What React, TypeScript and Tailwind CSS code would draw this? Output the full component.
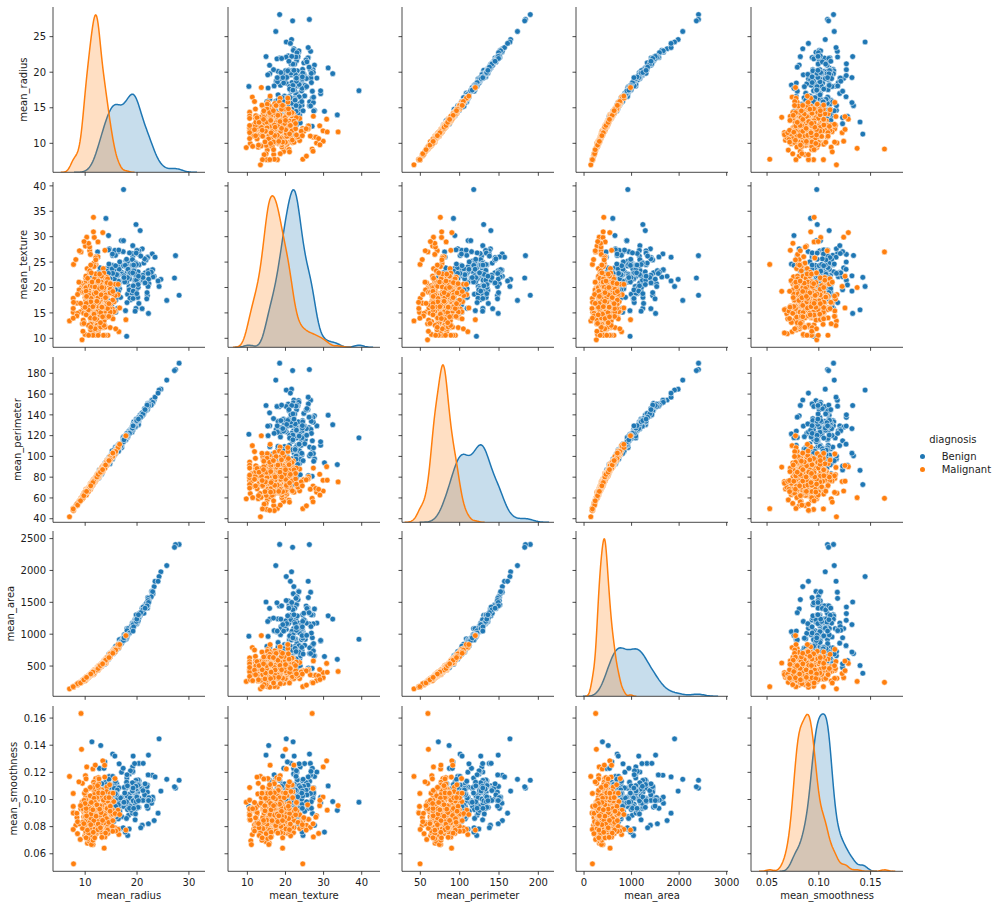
import React from 'react';

const BLUE = '#1f77b4';
const ORANGE = '#ff7f0e';
const INK = '#1c1c1c';
const W = 152;
const H = 165.3;

type Row = [number, number, number, number, number];

function mulberry32(seed: number) {
  let a = seed;
  return function () {
    a |= 0;
    a = (a + 0x6d2b79f5) | 0;
    let t = Math.imul(a ^ (a >>> 15), 1 | a);
    t = (t + Math.imul(t ^ (t >>> 7), 61 | t)) ^ t;
    return ((t ^ (t >>> 14)) >>> 0) / 4294967296;
  };
}

function genData() {
  const rand = mulberry32(20240611);
  const randn = () => {
    let u = 0;
    while (u === 0) u = rand();
    const v = rand();
    return Math.sqrt(-2 * Math.log(u)) * Math.cos(2 * Math.PI * v);
  };
  const clamp = (v: number, a: number, b: number) => Math.max(a, Math.min(b, v));
  const per = (r: number, n: number) => 6.89 * r - 4.4 + n * randn();
  const area = (r: number, n: number) => r * r * (2.93 + 0.0124 * (r - 7)) * (1 + n * randn());
  const mk = (r: number, t: number, s: number, pn: number, an: number): Row => [r, t, per(r, pn), area(r, an), s];

  const blue: Row[] = [];
  const extremesB: [number, number, number][] = [
    [28.11, 18.47, 0.1142],
    [27.42, 26.27, 0.1084],
    [27.22, 21.87, 0.1094],
    [25.73, 17.46, 0.1149],
    [24.6, 21.6, 0.1062],
    [23.3, 22.2, 0.0845],
    [22.2, 14.9, 0.1327],
    [17.4, 39.28, 0.098],
    [24.25, 20.2, 0.1447],
    [11.3, 22.0, 0.1425],
    [13.0, 15.6, 0.1398],
    [15.3, 26.3, 0.1335],
    [18.2, 24.6, 0.0735],
    [18.0, 10.4, 0.095],
    [20.6, 31.2, 0.11],
    [19.8, 32.4, 0.0985],
    [14.0, 33.6, 0.092],
    [12.4, 27.0, 0.1],
  ];
  for (const [r, t, s] of extremesB) blue.push(mk(r, t, s, 1.2, 0.02));
  for (let i = blue.length; i < 212; i++) {
    const u = rand();
    let r =
      u < 0.38 ? 15.6 + 1.0 * randn() : u < 0.72 ? 18.9 + 1.0 * randn() : u < 0.9 ? 21.4 + 1.4 * randn() : 13.4 + 0.8 * randn();
    r = clamp(r, 12.0, 25);
    const t = clamp(21.5 + 3.0 * randn(), 13.5, 30.5);
    const s = clamp(0.1022 + 0.0105 * randn() + 0.0006 * (r - 17), 0.076, 0.132);
    blue.push(mk(r, t, s, 1.7, 0.03));
  }

  const orange: Row[] = [];
  const extremesO: [number, number, number][] = [
    [6.98, 13.43, 0.117],
    [7.76, 24.54, 0.0526],
    [9.2, 27.0, 0.1634],
    [9.3, 20.0, 0.137],
    [11.6, 33.81, 0.0955],
    [17.85, 13.66, 0.0775],
    [9.4, 9.71, 0.098],
    [11.0, 10.9, 0.0696],
    [16.5, 11.3, 0.0742],
    [8.2, 25.5, 0.081],
    [13.4, 30.8, 0.1285],
    [10.3, 29.9, 0.124],
  ];
  for (const [r, t, s] of extremesO) orange.push(mk(r, t, s, 0.9, 0.02));
  for (let i = orange.length; i < 357; i++) {
    const r = clamp(12.15 + 1.7 * randn(), 7.7, 17.2);
    const u = rand();
    const t = u < 0.04 ? clamp(27.8 + 1.3 * randn(), 25, 31) : clamp(17.2 + 3.3 * randn(), 10.6, 29.5);
    const w = rand();
    const s = w < 0.7 ? 0.0862 + 0.0082 * randn() : 0.0995 + 0.011 * randn();
    orange.push(mk(r, t, clamp(s, 0.062, 0.127), 1.0, 0.025));
  }
  return { blue, orange };
}

const DATA = genData();

type VarSpec = {
  name: string;
  xlim: [number, number];
  ylim: [number, number];
  xticks: number[];
  yticks: number[];
  dec: number;
};

const VARS: VarSpec[] = [
  { name: 'mean_radius', xlim: [3.8, 33.1], ylim: [5.925, 29.17], xticks: [10, 20, 30], yticks: [10, 15, 20, 25], dec: 0 },
  { name: 'mean_texture', xlim: [4.92, 44.8], ylim: [8.23, 40.76], xticks: [10, 20, 30, 40], yticks: [10, 15, 20, 25, 30, 35, 40], dec: 0 },
  { name: 'mean_perimeter', xlim: [26.7, 219.9], ylim: [36.55, 195.7], xticks: [50, 100, 150, 200], yticks: [40, 60, 80, 100, 120, 140, 160, 180], dec: 0 },
  { name: 'mean_area', xlim: [-169, 3028], ylim: [25.6, 2618.9], xticks: [0, 1000, 2000, 3000], yticks: [500, 1000, 1500, 2000, 2500], dec: 0 },
  { name: 'mean_smoothness', xlim: [0.0345, 0.1813], ylim: [0.04709, 0.1689], xticks: [0.05, 0.1, 0.15], yticks: [0.06, 0.08, 0.1, 0.12, 0.14, 0.16], dec: 2 },
];

function fmt(v: number, dec: number) {
  return dec ? v.toFixed(dec) : String(v);
}

function labelWidth(s: string) {
  let w = 0;
  for (const ch of s) w += ch === '.' ? 3.18 : 6.36;
  return w;
}

function kde(vals: number[]) {
  const n = vals.length;
  const mean = vals.reduce((a, b) => a + b, 0) / n;
  const sd = Math.sqrt(vals.reduce((a, b) => a + (b - mean) * (b - mean), 0) / (n - 1));
  const sorted = [...vals].sort((a, b) => a - b);
  const q = (p: number) => sorted[Math.floor(p * (n - 1))];
  const iqr = q(0.75) - q(0.25);
  const bw = 1.059 * Math.min(sd, iqr / 1.349) * Math.pow(n, -0.2);
  const lo = sorted[0] - 3 * bw;
  const hi = sorted[n - 1] + 3 * bw;
  const pts: [number, number][] = [];
  const G = 120;
  for (let k = 0; k < G; k++) {
    const x = lo + ((hi - lo) * k) / (G - 1);
    let d = 0;
    for (const v of vals) {
      const z = (x - v) / bw;
      d += Math.exp(-0.5 * z * z);
    }
    pts.push([x, d / (n * bw * Math.sqrt(2 * Math.PI))]);
  }
  return pts;
}

const KDES = VARS.map((_, j) => ({
  blue: kde(DATA.blue.map((r) => r[j])),
  orange: kde(DATA.orange.map((r) => r[j])),
}));

function Panel({ i, j }: { i: number; j: number }) {
  const vx = VARS[j];
  const vy = VARS[i];
  const sx = (v: number) => ((v - vx.xlim[0]) / (vx.xlim[1] - vx.xlim[0])) * W;
  const sy = (v: number) => H - ((v - vy.ylim[0]) / (vy.ylim[1] - vy.ylim[0])) * H;
  const showY = j === 0;
  const showX = i === 4;

  let body: React.ReactNode;
  if (i === j) {
    const k = KDES[j];
    const ymax = Math.max(...k.blue.map((p) => p[1]), ...k.orange.map((p) => p[1])) * 1.05;
    const syd = (d: number) => H - (d / ymax) * H;
    const line = (pts: [number, number][]) =>
      pts.map((p, idx) => `${idx ? 'L' : 'M'}${sx(p[0]).toFixed(2)},${syd(p[1]).toFixed(2)}`).join(' ');
    const fill = (pts: [number, number][]) =>
      `M${sx(pts[0][0]).toFixed(2)},${H} ` +
      pts.map((p) => `L${sx(p[0]).toFixed(2)},${syd(p[1]).toFixed(2)}`).join(' ') +
      ` L${sx(pts[pts.length - 1][0]).toFixed(2)},${H} Z`;
    body = (
      <g>
        <path d={line(k.blue)} fill="none" stroke={BLUE} strokeWidth={1.5} strokeLinejoin="round" />
        <path d={fill(k.blue)} fill={BLUE} fillOpacity={0.25} stroke="none" />
        <path d={line(k.orange)} fill="none" stroke={ORANGE} strokeWidth={1.5} strokeLinejoin="round" />
        <path d={fill(k.orange)} fill={ORANGE} fillOpacity={0.25} stroke="none" />
      </g>
    );
  } else {
    body = (
      <g stroke="#ffffff" strokeWidth={0.55}>
        {DATA.blue.map((r, idx) => (
          <circle key={'b' + idx} cx={sx(r[j])} cy={sy(r[i])} r={2.85} fill={BLUE} />
        ))}
        {DATA.orange.map((r, idx) => (
          <circle key={'o' + idx} cx={sx(r[j])} cy={sy(r[i])} r={2.85} fill={ORANGE} />
        ))}
      </g>
    );
  }

  const maxW = Math.max(...vy.yticks.map((t) => labelWidth(fmt(t, vy.dec))));
  const ylabX = -(7 + maxW + 4 + 2.4);

  return (
    <svg width={W} height={H} className="overflow-visible block">
      <defs>
        <clipPath id={`c${i}${j}`}>
          <rect x={0} y={0} width={W} height={H} />
        </clipPath>
      </defs>
      <g clipPath={`url(#c${i}${j})`}>{body}</g>
      <line x1={0} y1={0} x2={0} y2={H} stroke={INK} strokeWidth={0.8} />
      <line x1={0} y1={H} x2={W} y2={H} stroke={INK} strokeWidth={0.8} />
      {vx.xticks.map((t) => (
        <line key={'xt' + t} x1={sx(t)} x2={sx(t)} y1={H} y2={H + 3.5} stroke={INK} strokeWidth={0.8} />
      ))}
      {vy.yticks.map((t) => (
        <line key={'yt' + t} x1={-3.5} x2={0} y1={sy(t)} y2={sy(t)} stroke={INK} strokeWidth={0.8} />
      ))}
      {showX &&
        vx.xticks.map((t) => (
          <text key={'xl' + t} x={sx(t)} y={H + 14.4} fontSize={10} fill={INK} textAnchor="middle">
            {fmt(t, vx.dec)}
          </text>
        ))}
      {showY &&
        vy.yticks.map((t) => (
          <text key={'yl' + t} x={-7} y={sy(t) + 3.65} fontSize={10} fill={INK} textAnchor="end">
            {fmt(t, vy.dec)}
          </text>
        ))}
      {showX && (
        <text x={W / 2} y={H + 28} fontSize={10} fill={INK} textAnchor="middle">
          {vx.name}
        </text>
      )}
      {showY && (
        <text x={ylabX} y={H / 2} fontSize={10} fill={INK} textAnchor="middle" transform={`rotate(-90 ${ylabX} ${H / 2})`}>
          {vy.name}
        </text>
      )}
    </svg>
  );
}

export default function App() {
  const cells: React.ReactNode[] = [];
  for (let i = 0; i < 5; i++) for (let j = 0; j < 5; j++) cells.push(<Panel key={`${i}-${j}`} i={i} j={j} />);
  return (
    <div className="w-[999px] h-[910px] bg-white flex font-['DejaVu_Sans',sans-serif] text-[#1c1c1c]">
      <div className="self-start pl-[53.3px] pt-[7.3px] grid grid-cols-[repeat(5,152px)] grid-rows-[repeat(5,165.3px)] gap-x-[22.35px] gap-y-[9.4px]">
        {cells}
      </div>
      <div className="self-center ml-[17.5px] flex flex-col text-[10px] leading-[13.6px]">
        <div className="ml-[9px] mb-[2.8px]">diagnosis</div>
        <div className="flex items-center">
          <span className="w-[5px] h-[5px] rounded-full bg-[#1f77b4]" />
          <span className="ml-[16.5px]">Benign</span>
        </div>
        <div className="flex items-center">
          <span className="w-[5px] h-[5px] rounded-full bg-[#ff7f0e]" />
          <span className="ml-[16.5px]">Malignant</span>
        </div>
      </div>
    </div>
  );
}
